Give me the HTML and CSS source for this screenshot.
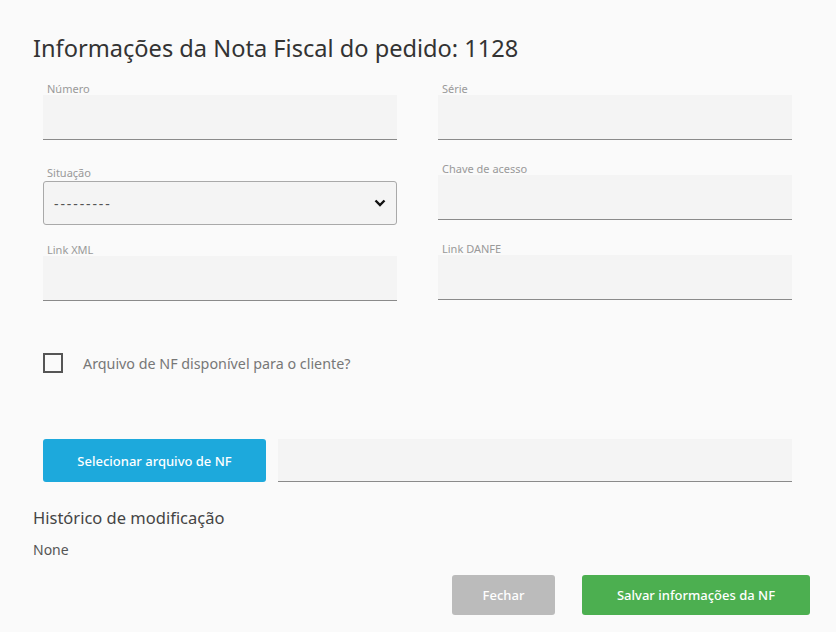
FILE: index.html
```html
<!DOCTYPE html>
<html>
<head>
    <meta charset="utf-8">
    <title>Nota Fiscal</title>
    <link rel="stylesheet" href="styles.css">
</head>
<body>
    <div class="modal">
        <h2 class="title">Informações da Nota Fiscal do pedido: 1128</h2>

        <div class="fields">
            <div class="col">
                <div class="field">
                    <label>Número</label>
                    <input type="text">
                </div>
                <div class="field field-select">
                    <label>Situação</label>
                    <div class="select-box">
                        <span class="dashes">---------</span>
                        <svg width="12" height="8" viewBox="0 0 12 8"><path d="M1.5 1.5 L6 6 L10.5 1.5" fill="none" stroke="#111" stroke-width="2.4"/></svg>
                    </div>
                </div>
                <div class="field">
                    <label>Link XML</label>
                    <input type="text">
                </div>
            </div>
            <div class="col">
                <div class="field">
                    <label>Série</label>
                    <input type="text">
                </div>
                <div class="field">
                    <label>Chave de acesso</label>
                    <input type="text">
                </div>
                <div class="field">
                    <label>Link DANFE</label>
                    <input type="text">
                </div>
            </div>
        </div>

        <label class="check-row">
            <span class="check"></span>
            Arquivo de NF disponível para o cliente?
        </label>

        <div class="file-row">
            <button class="btn btn-blue">Selecionar arquivo de NF</button>
            <input type="text" class="file-name">
        </div>

        <h3 class="history">Histórico de modificação</h3>
        <p class="none">None</p>

        <div class="actions">
            <button class="btn btn-gray">Fechar</button>
            <button class="btn btn-green">Salvar informações da NF</button>
        </div>
    </div>
</body>
</html>
```

FILE: styles.css
```css
body {
    margin: 0;
    background-color: #fafafa;
    font-family: "Noto Sans", "Open Sans", sans-serif;
    color: #444;
}
.modal {
    padding: 33px 26px 0 33px;
}
.title {
    margin: 0;
    font-size: 23.6px;
    font-weight: 400;
    line-height: 30px;
    color: #333;
}
.fields {
    display: flex;
    gap: 41px;
    margin: 19px 0 0 10px;
}
.col {
    width: 354px;
    display: flex;
    flex-direction: column;
    gap: 22px;
}
.field label {
    display: block;
    font-size: 11px;
    line-height: 13px;
    color: #999;
    padding-left: 4px;
}
.field input, .file-name {
    display: block;
    box-sizing: border-box;
    width: 100%;
    height: 45px;
    border: none;
    border-bottom: 1px solid #8a8a8a;
    background-color: #f4f4f4;
    margin: 0;
    outline: none;
}
.field-select {
    margin-top: 4px;
    margin-bottom: -4px;
}
.select-box {
    box-sizing: border-box;
    height: 44px;
    margin-top: 2px;
    border: 1px solid #a9a9a9;
    border-radius: 3px;
    background-color: #f4f4f4;
    display: flex;
    align-items: center;
    justify-content: space-between;
    padding: 0 10px 0 10px;
    font-size: 14px;
    color: #555;
}
.dashes {
    letter-spacing: 1.9px;
}
.check-row {
    display: flex;
    align-items: center;
    gap: 20px;
    margin: 52px 0 0 10px;
    font-size: 14.3px;
    color: #777;
}
.check {
    box-sizing: border-box;
    width: 20px;
    height: 20px;
    border: 2px solid #555;
}
.file-row {
    display: flex;
    gap: 12px;
    margin: 66px 0 0 10px;
}
.btn {
    border: none;
    border-radius: 3px;
    color: #fff;
    font-family: inherit;
    font-size: 13px;
    font-weight: 500;
    cursor: pointer;
}
.btn-blue {
    width: 223px;
    height: 43px;
    background-color: #1da9dc;
}
.file-name {
    width: 514px;
    height: 43px;
}
.history {
    margin: 25px 0 0;
    font-size: 16.5px;
    font-weight: 400;
    line-height: 22px;
    color: #444;
}
.none {
    margin: 12px 0 0;
    font-size: 14px;
    line-height: 18px;
    color: #555;
}
.actions {
    display: flex;
    justify-content: flex-end;
    gap: 27px;
    margin-top: 16px;
}
.btn-gray {
    width: 103px;
    height: 40px;
    background-color: #bbbbbb;
}
.btn-green {
    width: 228px;
    height: 40px;
    background-color: #4caf50;
}
```
